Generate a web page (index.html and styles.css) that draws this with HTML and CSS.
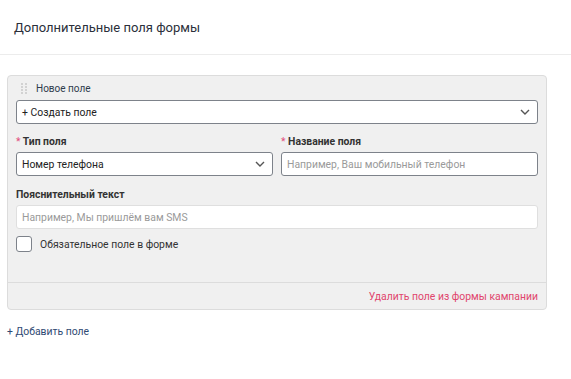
FILE: index.html
```html
<!DOCTYPE html>
<html lang="ru">
<head>
    <meta charset="UTF-8">
    <meta name="viewport" content="width=device-width, initial-scale=1.0">
    <title>Дополнительные поля формы</title>
    <link rel="stylesheet" href="styles.css">
</head>
<body>
    <header class="page-head">
        <h1>Дополнительные поля формы</h1>
    </header>

    <div class="field-card">
        <div class="card-body">
            <div class="card-title">
                <span class="drag">
                    <i></i><i></i><i></i><i></i><i></i><i></i><i></i><i></i>
                </span>
                Новое поле
            </div>

            <div class="select">
                <span>+ Создать поле</span>
                <svg width="10" height="6" viewBox="0 0 10 6"><path d="M1 1l4 4 4-4" fill="none" stroke="#555" stroke-width="1.4"/></svg>
            </div>

            <div class="row">
                <div class="group">
                    <label><span class="req">*</span> Тип поля</label>
                    <div class="select">
                        <span>Номер телефона</span>
                        <svg width="10" height="6" viewBox="0 0 10 6"><path d="M1 1l4 4 4-4" fill="none" stroke="#555" stroke-width="1.4"/></svg>
                    </div>
                </div>
                <div class="group">
                    <label><span class="req">*</span> Название поля</label>
                    <input class="input dark" type="text" placeholder="Например, Ваш мобильный телефон">
                </div>
            </div>

            <div class="group">
                <label>Пояснительный текст</label>
                <input class="input" type="text" placeholder="Например, Мы пришлём вам SMS">
            </div>

            <div class="check">
                <span class="box"></span>
                Обязательное поле в форме
            </div>
        </div>
        <div class="card-foot">
            <a href="#">Удалить поле из формы кампании</a>
        </div>
    </div>

    <a class="add-link" href="#">+ Добавить поле</a>
</body>
</html>
```

FILE: styles.css
```css
body {
    margin: 0;
    padding: 0;
    font-family: Roboto, "Noto Sans", Arial, sans-serif;
    font-size: 10.4px;
    color: #333;
    background-color: #fff;
}
.page-head {
    height: 54px;
    border-bottom: 1px solid #ececec;
    display: flex;
    align-items: center;
    padding-left: 14px;
}
.page-head h1 {
    margin: 0;
    font-size: 13px;
    font-weight: 400;
    color: #2b2f3a;
}
.field-card {
    margin: 20px 24px 0 7px;
    background-color: #f0f0f0;
    border: 1px solid #dcdcdc;
    border-radius: 4px;
}
.card-body {
    padding: 6px 8px 30px 8px;
}
.card-title {
    display: flex;
    align-items: center;
    height: 13px;
    font-size: 10px;
    color: #2f3b4c;
}
.drag {
    display: grid;
    grid-template-columns: 2px 2px;
    column-gap: 2px;
    row-gap: 1px;
    margin: 0 9px 0 5px;
}
.drag i {
    width: 2px;
    height: 2px;
    background-color: #d2d2d2;
}
.select {
    height: 22px;
    margin-top: 5px;
    background: #fff;
    border: 1px solid #7d828a;
    border-radius: 3px;
    display: flex;
    align-items: center;
    justify-content: space-between;
    padding: 0 7px 0 5px;
    color: #222;
}
.row {
    display: flex;
    gap: 8px;
    margin-top: 11px;
}
.row .group {
    flex: 1;
    margin-top: 0;
}
.group {
    margin-top: 12px;
}
.group label {
    display: block;
    height: 14px;
    line-height: 14px;
    margin-bottom: 3px;
    font-weight: 700;
    color: #333;
}
.group .select {
    margin-top: 0;
}
.req {
    color: #e2507e;
    font-weight: 400;
}
.input {
    display: block;
    width: 100%;
    height: 24px;
    box-sizing: border-box;
    border: 1px solid #dfdfdf;
    border-radius: 3px;
    padding: 0 5px;
    font-family: inherit;
    font-size: 10.4px;
    background: #fff;
    margin: 0;
}
.input.dark {
    border-color: #7d828a;
}
.input::placeholder {
    color: #9a9a9a;
}
.check {
    display: flex;
    align-items: center;
    margin-top: 7px;
    color: #333;
}
.check .box {
    width: 14px;
    height: 14px;
    border: 1px solid #7d828a;
    border-radius: 3px;
    background: #fff;
    margin-right: 8px;
}
.card-foot {
    border-top: 1px solid #dcdcdc;
    height: 26px;
    display: flex;
    align-items: center;
    justify-content: flex-end;
    padding-right: 8px;
}
.card-foot a {
    color: #e0456d;
    text-decoration: none;
}
.add-link {
    display: inline-block;
    margin: 15px 0 0 7px;
    color: #2f4a73;
    text-decoration: none;
}
```
